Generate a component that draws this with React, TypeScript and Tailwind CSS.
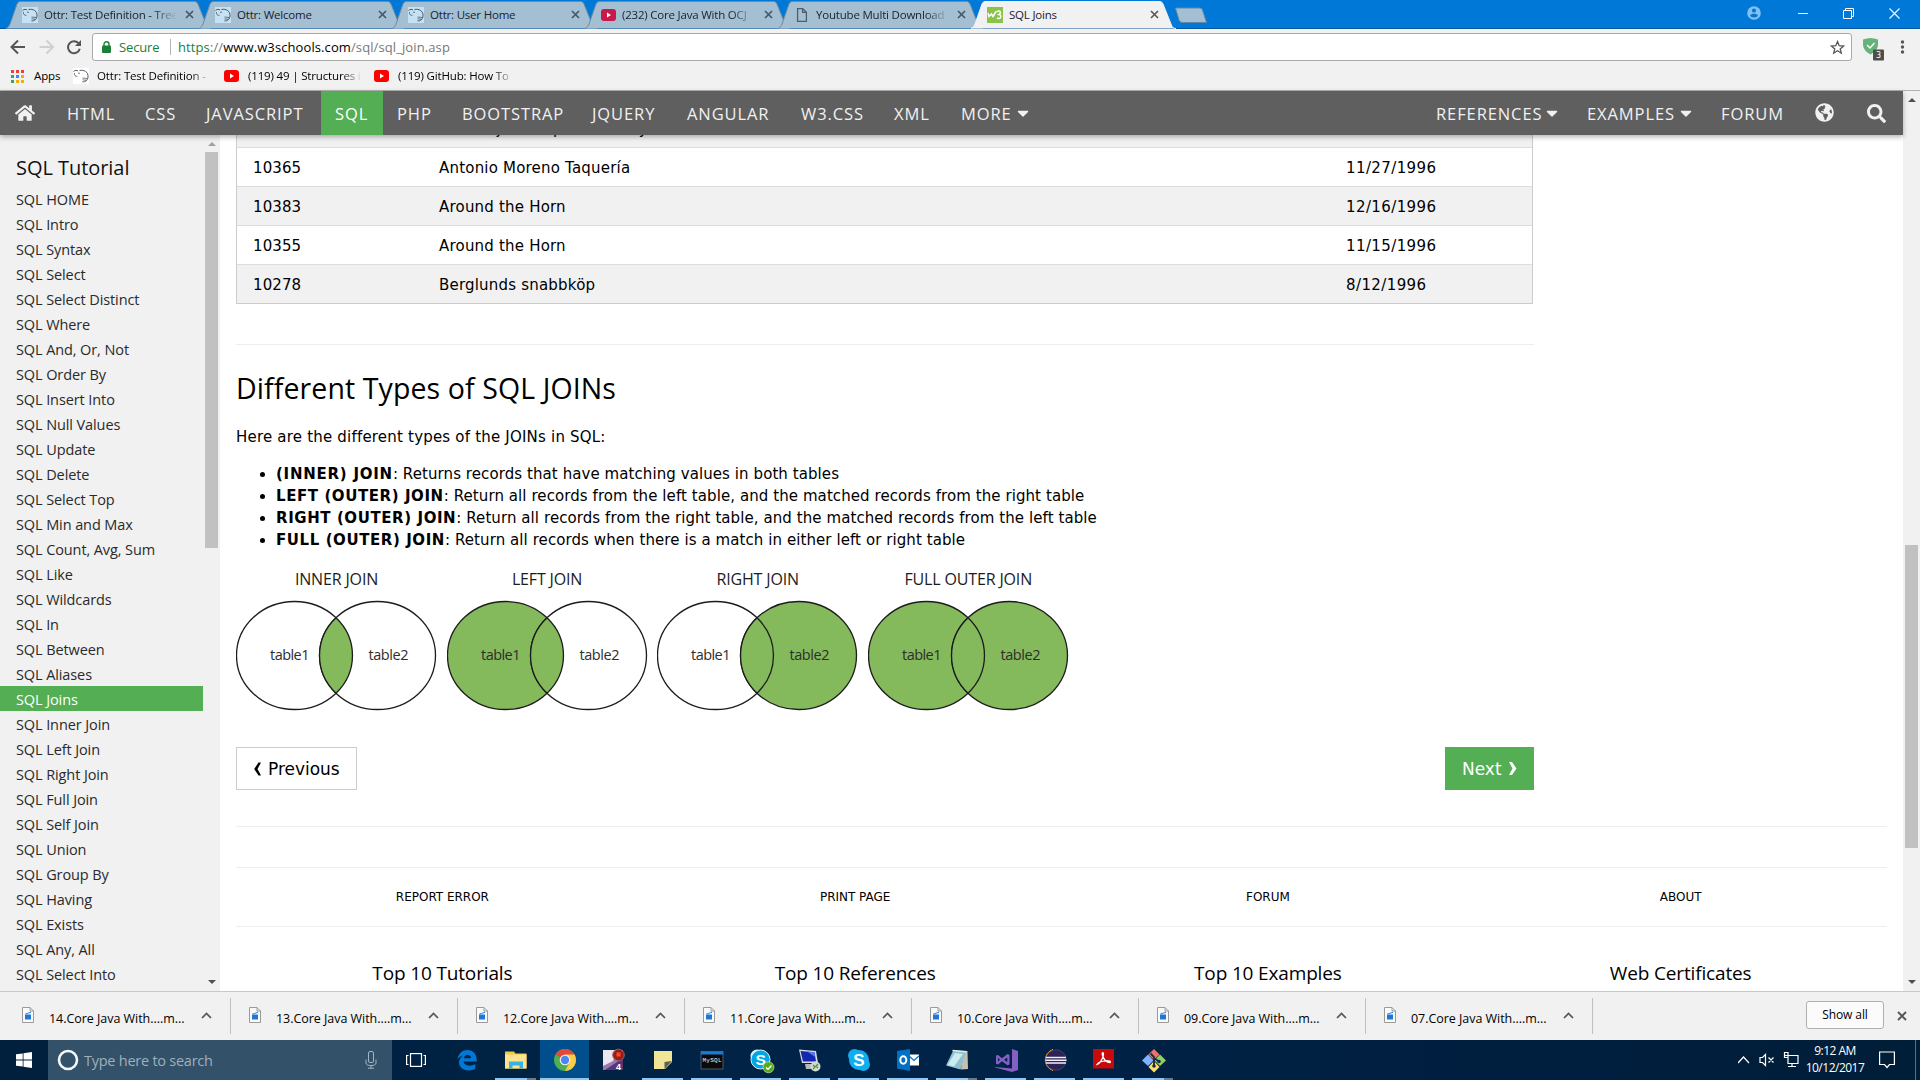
import React from "react";
import { FaHome, FaSearch, FaGlobeAmericas, FaCaretDown } from "react-icons/fa";

const UI = "font-['Open_Sans','Noto_Sans',sans-serif]";
const VERDANA = "font-['DejaVu_Sans',sans-serif]";

function OttrIcon({ bg }: { bg: string }) {
  return (
    <svg width="16" height="16" viewBox="0 0 16 16" className="shrink-0" fill="none" stroke="#3c4650">
      <rect width="16" height="16" fill={bg} stroke="none" />
      <path d="M.5 3.500 C2 2 4 2.200 5 3 M6.500 2.500 C11 1.500 15.500 4 15 9 C14.800 12 12.500 14.300 9.500 13.800" strokeWidth=".9" />
      <path d="M1.500 5 C1 7.500 2.500 8.500 4.500 8.300 M9.500 10 L14 10.500 M9.500 11.800 L13.500 12.300" strokeWidth=".7" />
      <circle cx="6" cy="5.200" r=".7" fill="#3c4650" stroke="none" />
    </svg>
  );
}

function YouTubeIcon({ fill }: { fill: string }) {
  return (
    <svg width="15" height="12" viewBox="0 0 15 12" className="shrink-0">
      <rect width="15" height="12" rx="3" fill={fill} />
      <path d="M6 3.500 L10 6 L6 8.500 Z" fill="#fff" />
    </svg>
  );
}

function PageIcon() {
  return (
    <svg width="16" height="16" viewBox="0 0 16 16" className="shrink-0" fill="none" stroke="#4d5f6c" strokeWidth="1.300">
      <path d="M3.600 1.600 H8.700 L12.400 5.300 V14.400 H3.600 Z M8.600 1.600 V5.400 H12.400" />
    </svg>
  );
}

function W3Icon() {
  return (
    <svg width="16" height="16" viewBox="0 0 16 16" className="shrink-0" fill="none" stroke="#fff" strokeWidth="1.500">
      <rect width="16" height="16" fill="#8bc34a" stroke="none" />
      <path d="M1 6 L2 9.500 L4.500 7 L6 9.500 L9 4.500 M9.500 5 C13 2.500 15 6 12 7.500 C15.500 8.500 13.500 13 10 11" />
    </svg>
  );
}

function TabClose({ color }: { color: string }) {
  return (
    <svg width="9" height="9" viewBox="0 0 9 9" className="shrink-0" stroke={color} strokeWidth="1.700">
      <path d="M1 1 L8 8 M8 1 L1 8" />
    </svg>
  );
}

const tabs = [
  { title: "Ottr: Test Definition - Tree", icon: "ottr", fade: true },
  { title: "Ottr: Welcome", icon: "ottr", fade: false },
  { title: "Ottr: User Home", icon: "ottr", fade: false },
  { title: "(232) Core Java With OCJ", icon: "yt", fade: true },
  { title: "Youtube Multi Download", icon: "page", fade: true },
  { title: "SQL Joins", icon: "w3", fade: false },
];

function Tab({ title, icon, fade, active }: { title: string; icon: string; fade: boolean; active: boolean }) {
  return (
    <div className={active ? "relative z-10 w-[193px] h-[29px] shrink-0" : "relative w-[193px] h-[29px] shrink-0"}>
      <svg width="208" height="29" viewBox="0 0 208 29" className="absolute left-0 top-0">
        <path
          d="M0 28.500 C2 28 3 26 4 24 L11 4 Q12 1.500 14 1.500 H189 Q191 1.500 192 4 L200 24 C201 27 202 28.500 205 28.500"
          fill={active ? "#f1f1f1" : "#a4bed2"}
          stroke={active ? "#f1f1f1" : "#6d8ba3"}
        />
      </svg>
      <div className="relative flex h-full items-center pl-[16px]">
        {icon === "ottr" && <OttrIcon bg="#c5e1f3" />}
        {icon === "yt" && <YouTubeIcon fill="#c9194a" />}
        {icon === "page" && <PageIcon />}
        {icon === "w3" && <W3Icon />}
        <div
          className={
            fade
              ? "ml-[6px] w-[133px] overflow-hidden whitespace-nowrap text-[11.5px] leading-4 tracking-[-0.2px] text-[#16222c] [mask-image:linear-gradient(to_right,black_82%,transparent)]"
              : "ml-[6px] w-[133px] overflow-hidden whitespace-nowrap text-[11.5px] leading-4 tracking-[-0.2px] text-[#16222c]"
          }
        >
          {title}
        </div>
        <div className="ml-auto mr-[3px] flex w-[14px] justify-center">
          <TabClose color={active ? "#5a5a5a" : "#46586a"} />
        </div>
      </div>
    </div>
  );
}

function TabStrip() {
  return (
    <div className="relative flex h-[29px] bg-[#0078d7] pl-[6px]">
      <div className="absolute inset-x-0 bottom-0 h-px bg-[#0a57a0]" />
      {tabs.map((t, i) => (
        <Tab key={i} {...t} active={i === 5} />
      ))}
      <svg width="34" height="17" viewBox="0 0 34 17" className="ml-[10px] mt-[7px]">
        <path d="M1.500 1 H26 Q28 1 28.500 3 L32.500 15.500 H8 Q6 15.500 5 13 Z" fill="#a4bed2" stroke="#5d88ad" />
      </svg>
      <div className="ml-auto flex h-[26px] items-center text-white">
        <svg width="14" height="14" viewBox="0 0 14 14" className="mr-[37px]">
          <circle cx="7" cy="7" r="6.800" fill="#86bfee" />
          <circle cx="7" cy="4.600" r="2.100" fill="#0078d7" />
          <path d="M3 9.800 C4 7.200 10 7.200 11 9.800 C9.500 12 4.500 12 3 9.800Z" fill="#0078d7" />
        </svg>
        <svg width="10" height="11" viewBox="0 0 10 11" className="mr-[35px]">
          <path d="M0 5.500 H10" stroke="#fff" />
        </svg>
        <svg width="11" height="11" viewBox="0 0 11 11" className="mr-[35px]" fill="none" stroke="#fff">
          <path d="M.5 2.500 H8.500 V10.500 H.5 Z M2.500 2.500 V.5 H10.500 V8.500 H8.500" />
        </svg>
        <svg width="11" height="11" viewBox="0 0 11 11" className="mr-[20px]" stroke="#fff" strokeWidth="1.100">
          <path d="M.5 .5 L10.500 10.500 M10.500 .5 L.5 10.500" />
        </svg>
      </div>
    </div>
  );
}

function Toolbar() {
  return (
    <div className="flex h-[36px] items-center bg-[#f1f1f1]">
      <svg width="92" height="32" viewBox="0 0 92 32" fill="none" strokeWidth="2">
        <path d="M25 16 H12 M18 9.500 L11.500 16 L18 22.500" stroke="#555" />
        <path d="M39.500 16 H52.500 M46.500 9.500 L53 16 L46.500 22.500" stroke="#d0d0d0" />
        <path d="M78.500 12.200 A6 6 0 1 0 79.800 17.800" stroke="#555" />
        <path d="M81 9 V15 H75 Z" fill="#555" />
      </svg>
      <div className="flex h-[28px] w-[1760px] items-center rounded-[3px] border border-[#a9a9a9] bg-white pl-[9px]">
        <svg width="9" height="12" viewBox="0 0 9 12" fill="none">
          <rect x="0" y="4.500" width="9" height="7.500" rx="1" fill="#188038" />
          <path d="M2 5 V3.200 A2.500 2.500 0 0 1 7 3.200 V5" stroke="#188038" strokeWidth="1.400" />
        </svg>
        <span className="ml-[8px] w-[43px] pt-px text-[13px] tracking-[-0.15px] text-[#188038]">Secure</span>
        <span className="ml-[8px] mr-[7px] h-[16px] w-px bg-[#b5b5b5]" />
        <span className="whitespace-nowrap pt-px text-[13px] tracking-[0.1px] text-[#777]">
          <span className="text-[#188038]">https</span>://<span className="text-black">www.w3schools.com</span>/sql/sql_join.asp
        </span>
        <svg width="15" height="15" viewBox="0 0 15 15" className="ml-auto mr-[6px]" fill="none" stroke="#555" strokeWidth="1.300">
          <path d="M7.500 1.600 L9.200 5.700 L13.600 6 L10.200 8.900 L11.300 13.200 L7.500 10.800 L3.700 13.200 L4.800 8.900 L1.400 6 L5.800 5.700 Z" />
        </svg>
      </div>
      <svg width="68" height="32" viewBox="0 0 68 32">
        <path d="M11 8.500 Q18.500 5.500 26 8.500 V13 C26 18 23 21 18.500 23.500 C14 21 11 18 11 13 Z" fill="#67b279" />
        <path d="M15 14 L18 17 L22.500 12" stroke="#fff" strokeWidth="1.400" fill="none" />
        <rect x="21" y="18.500" width="11" height="11" rx="1" fill="#4e4e4e" />
        <text x="26.500" y="27.200" fontSize="8" fill="#fff" textAnchor="middle" fontFamily="DejaVu Sans">3</text>
        <g fill="#555">
          <circle cx="50.500" cy="11" r="1.700" />
          <circle cx="50.500" cy="16" r="1.700" />
          <circle cx="50.500" cy="21" r="1.700" />
        </g>
      </svg>
    </div>
  );
}

function Bookmark({ children, className }: { children: string; className: string }) {
  return (
    <span className={"overflow-hidden whitespace-nowrap text-[11.5px] leading-4 tracking-[-0.16px] text-black [mask-image:linear-gradient(to_right,black_82%,transparent)] " + className}>
      {children}
    </span>
  );
}

function Bookmarks() {
  const colors = ["#e8413a", "#e8413a", "#e8413a", "#34a853", "#4285f4", "#f9ab00", "#34a853", "#f9ab00", "#f9ab00"];
  return (
    <div className="flex h-[26px] items-center border-b border-[#b2b2b2] bg-[#f1f1f1] pb-[3px] pl-[11px]">
      <div className="grid grid-cols-3 gap-[2px]">
        {colors.map((c, i) => (
          <span key={i} className="h-[3px] w-[3px]" style={{ background: c }} />
        ))}
      </div>
      <span className="ml-[10px] w-[39px] text-[11.5px] leading-4 tracking-[-0.1px]">Apps</span>
      <OttrIcon bg="#fff" />
      <Bookmark className="ml-[8px] w-[114px]">Ottr: Test Definition -</Bookmark>
      <span className="ml-[13px]" />
      <YouTubeIcon fill="#f00" />
      <Bookmark className="ml-[9px] w-[114px]">(119) 49 | Structures i</Bookmark>
      <span className="ml-[12px]" />
      <YouTubeIcon fill="#f00" />
      <Bookmark className="ml-[9px] w-[116px]">(119) GitHub: How To</Bookmark>
    </div>
  );
}

const nav: [string, string][] = [
  ["HTML", "w-[78px]"],
  ["CSS", "w-[61px]"],
  ["JAVASCRIPT", "w-[130px]"],
  ["SQL", "w-[62px]"],
  ["PHP", "w-[65px]"],
  ["BOOTSTRAP", "w-[130px]"],
  ["JQUERY", "w-[95px]"],
  ["ANGULAR", "w-[114px]"],
  ["W3.CSS", "w-[93px]"],
  ["XML", "w-[67px]"],
];

function NavBar() {
  return (
    <div className="relative z-10 flex h-[44px] items-center bg-[#5f5f5f] text-[16.5px] leading-[46px] tracking-[0.9px] text-[#f1f1f1] shadow-[0_2px_5px_rgba(0,0,0,0.3)]">
      <div className="flex w-[52px] justify-center pr-[2px]">
        <FaHome size={20} />
      </div>
      {nav.map(([label, w]) => (
        <div
          key={label}
          className={
            (label === "SQL" ? "bg-[#53ae54] text-white " : "") +
            (["HTML", "CSS", "JAVASCRIPT"].includes(label) ? "pl-[15px] " : "pl-[14px] ") +
            "h-[44px] whitespace-nowrap " + w
          }
        >
          {label}
        </div>
      ))}
      <div className="flex h-[44px] items-center pl-[14px]">
        <span className="h-[44px] w-[52px]">MORE</span>
        <FaCaretDown size={18} className="ml-px" />
      </div>
      <div className="ml-auto flex h-[44px] items-center">
        <div className="flex w-[151px] items-center">
          <span className="h-[44px] w-[106px]">REFERENCES</span>
          <FaCaretDown size={18} className="ml-px" />
        </div>
        <div className="flex w-[134px] items-center">
          <span className="h-[44px] w-[89px]">EXAMPLES</span>
          <FaCaretDown size={18} className="ml-px" />
        </div>
        <div className="h-[44px] w-[94px]">FORUM</div>
        <FaGlobeAmericas size={19} className="mb-[2px]" />
        <FaSearch size={19} className="ml-[33px] mr-[17px]" />
      </div>
    </div>
  );
}

const menu = [
  "SQL HOME", "SQL Intro", "SQL Syntax", "SQL Select", "SQL Select Distinct", "SQL Where", "SQL And, Or, Not",
  "SQL Order By", "SQL Insert Into", "SQL Null Values", "SQL Update", "SQL Delete", "SQL Select Top",
  "SQL Min and Max", "SQL Count, Avg, Sum", "SQL Like", "SQL Wildcards", "SQL In", "SQL Between", "SQL Aliases",
  "SQL Joins", "SQL Inner Join", "SQL Left Join", "SQL Right Join", "SQL Full Join", "SQL Self Join", "SQL Union",
  "SQL Group By", "SQL Having", "SQL Exists", "SQL Any, All", "SQL Select Into",
];

function Arrow({ up, color }: { up?: boolean; color: string }) {
  return (
    <svg width="8" height="4" viewBox="0 0 8 4">
      <path d={up ? "M0 4 L4 0 L8 4 Z" : "M0 0 L4 4 L8 0 Z"} fill={color} />
    </svg>
  );
}

function Sidebar() {
  return (
    <div className="flex w-[220px] shrink-0 overflow-hidden bg-[#f1f1f1]">
      <div className="w-[203px]">
        <h2 className="mt-[17px] pl-[16px] text-[20px] leading-[32px] tracking-[-0.05px] text-[#111]">SQL Tutorial</h2>
        <div className="mt-[2px]">
          {menu.map((m) => (
            <div
              key={m}
              className={
                m === "SQL Joins"
                  ? "h-[25px] whitespace-nowrap bg-[#53ae54] pl-[16px] text-[14.5px] leading-[27px] tracking-[-0.1px] text-white"
                  : "h-[25px] whitespace-nowrap pl-[16px] text-[14.5px] leading-[27px] tracking-[-0.1px] text-[#2a2a2a]"
              }
            >
              {m}
            </div>
          ))}
        </div>
      </div>
      <div className="ml-[2px] flex w-[13px] flex-col items-center pt-[7px]">
        <Arrow up color="#a0a0a0" />
        <div className="mt-[6px] h-[396px] w-full shrink-0 bg-[#c1c1c1]" />
        <div className="mb-[7px] mt-auto flex">
          <Arrow color="#505050" />
        </div>
      </div>
    </div>
  );
}

const rows = [
  ["10308", "Ana Trujillo Emparedados y helados", "9/18/1996"],
  ["10365", "Antonio Moreno Taquería", "11/27/1996"],
  ["10383", "Around the Horn", "12/16/1996"],
  ["10355", "Around the Horn", "11/15/1996"],
  ["10278", "Berglunds snabbköp", "8/12/1996"],
];

const joins = [
  { name: "INNER JOIN", left: "#fff", right: "#fff", mid: "#84b95c" },
  { name: "LEFT JOIN", left: "#84b95c", right: "#fff", mid: "#84b95c" },
  { name: "RIGHT JOIN", left: "#fff", right: "#84b95c", mid: "#84b95c" },
  { name: "FULL OUTER JOIN", left: "#84b95c", right: "#84b95c", mid: "#84b95c" },
];

function Venn({ left, right, mid }: { left: string; right: string; mid: string }) {
  return (
    <svg width="202" height="112" viewBox="0 0 202 112" stroke="#1c1c1c" strokeWidth="1.300">
      <ellipse cx="58.500" cy="55.500" rx="58" ry="54" fill={left} />
      <ellipse cx="141.500" cy="55.500" rx="58" ry="54" fill={right} />
      <path d="M100 17.800 A58 54 0 0 1 100 93.200 A58 54 0 0 1 100 17.800 Z" fill={mid} />
      <g stroke="none" fill="#2e2e2e" fontFamily="Open Sans" fontSize="14.500">
        <text x="34" y="59.500" textLength="39.500">table1</text>
        <text x="132.500" y="59.500" textLength="40">table2</text>
      </g>
    </svg>
  );
}

const kinds = [
  ["(INNER) JOIN", ": Returns records that have matching values in both tables"],
  ["LEFT (OUTER) JOIN", ": Return all records from the left table, and the matched records from the right table"],
  ["RIGHT (OUTER) JOIN", ": Return all records from the right table, and the matched records from the left table"],
  ["FULL (OUTER) JOIN", ": Return all records when there is a match in either left or right table"],
];

function Content() {
  return (
    <div className={"flex-1 overflow-hidden bg-white pl-[16px] text-black " + VERDANA}>
      <div className="-mt-[27px] w-[1297px] border border-[#ccc] text-[15px]">
        {rows.map((r, i) => (
          <div
            key={i}
            className={
              (i % 2 === 0 ? "bg-[#f1f1f1] " : "bg-white ") +
              (i < 4 ? "h-[39px] border-b border-[#ddd] " : "h-[38px] ") +
              "flex pl-[16px] leading-[40px] tracking-[0.2px]"
            }
          >
            <span className="w-[186px] tracking-[0.1px]">{r[0]}</span>
            <span className="w-[907px]">{r[1]}</span>
            <span className="tracking-[0.4px]">{r[2]}</span>
          </div>
        ))}
      </div>
      <div className="mt-[40px] h-px w-[1298px] bg-[#eee]" />
      <h1 className={"mt-[21px] text-[28.5px] leading-[44px] tracking-[0.1px] " + UI}>Different Types of SQL JOINs</h1>
      <p className="mt-[15px] text-[15px] leading-[24px] tracking-[0.2px]">Here are the different types of the JOINs in SQL:</p>
      <ul className="mt-[14px] pl-[24px] text-[15px] leading-[22px] tracking-[0.08px]">
        {kinds.map(([b, t]) => (
          <li key={b} className="flex items-center whitespace-pre">
            <span className="mr-[11px] h-[5px] w-[5px] rounded-full bg-black" />
            <b className={b === "(INNER) JOIN" ? "tracking-[0.75px]" : "tracking-[0.58px]"}>{b}</b>
            {t}
          </li>
        ))}
      </ul>
      <div className={"mt-[16px] flex gap-[8.6px] " + UI}>
        {joins.map((j) => (
          <div key={j.name} className="w-[202px]">
            <div className="mb-[8px] pr-[1px] text-center text-[16px] leading-[25px] tracking-[-0.15px] text-[#1c1c1c]">{j.name}</div>
            <Venn {...j} />
          </div>
        ))}
      </div>
      <div className="mt-[35px] flex h-[43px] w-[1298px] justify-between text-[17px] leading-[43px]">
        <div className="flex w-[121px] items-center whitespace-nowrap border border-[#ccc] pl-[16px]">
          <svg width="9" height="14" viewBox="0 0 9 14" className="mr-[6px]">
            <path d="M8 .5 L4.500 7 L8 13.500 H5.500 L1.200 7 L5.500 .5 Z" fill="#000" />
          </svg>
          <span className="pt-[2px] tracking-[-0.02px]">Previous</span>
        </div>
        <div className="flex w-[89px] items-center whitespace-nowrap bg-[#53ae54] pl-[17px] text-white">
          <span className="w-[41px] pt-[2px] tracking-[-0.02px]">Next</span>
          <svg width="9" height="15" viewBox="0 0 9 14" className="ml-[5px]">
            <path d="M1 .5 L4.500 7 L1 13.500 H4 L8.500 7 L4 .5 Z" fill="#fff" />
          </svg>
        </div>
      </div>
      <div className="mt-[36px] w-[1651px] border-t border-[#eee]" />
      <div className="mt-[40px] flex h-[60px] w-[1651px] border-y border-[#eee] text-[12px] leading-[58px] tracking-[-0.02px]">
        {["REPORT ERROR", "PRINT PAGE", "FORUM", "ABOUT"].map((f) => (
          <div key={f} className="flex-1 text-center">{f}</div>
        ))}
      </div>
      <div className={"mt-[30px] flex w-[1651px] text-[19px] leading-[32px] tracking-[-0.15px] " + UI}>
        {["Top 10 Tutorials", "Top 10 References", "Top 10 Examples", "Web Certificates"].map((f) => (
          <div key={f} className="flex-1 text-center">{f}</div>
        ))}
      </div>
    </div>
  );
}

function PageScrollbar() {
  return (
    <div className="flex w-[17px] shrink-0 flex-col items-center bg-[#f1f1f1] pt-[7px]">
      <Arrow up color="#505050" />
      <div className="mt-[443px] h-[303px] w-[13px] bg-[#c1c1c1]" />
      <div className="mb-[7px] mt-auto flex">
        <Arrow color="#505050" />
      </div>
    </div>
  );
}

function Downloads() {
  return (
    <div className="flex h-[49px] items-center border-t border-[#c8c8c8] bg-[#f1f1f1]">
      {["14", "13", "12", "11", "10", "09", "07"].map((n, i) => (
        <div key={n} className={(i === 0 ? "w-[231px] pl-[22px] " : "w-[227px] pl-[18px] ") + "flex h-[36px] items-center border-r border-[#c0c0c0]"}>
          <svg width="12" height="16" viewBox="0 0 12 16" className="mb-[3px]">
            <path d="M.5 .5 H8 L11.500 4 V15.500 H.5 Z" fill="#fafafa" stroke="#9a9a9a" />
            <path d="M8 .5 V4 H11.500" fill="none" stroke="#9a9a9a" />
            <path d="M3 7.500 H9 V12.500 H3 Z M3 6.800 L9 4.800 V5.800 L4 7.200 Z" fill="#1e78d7" />
          </svg>
          <span className="ml-[15px] w-[142px] whitespace-nowrap pt-[5px] text-[12.5px] leading-4 tracking-[-0.04px] text-black">{n}.Core Java With....m...</span>
          <svg width="11" height="7" viewBox="0 0 11 7" className="ml-[10px] mb-[1px]" fill="none" stroke="#555" strokeWidth="1.700">
            <path d="M1 6 L5.500 1.500 L10 6" />
          </svg>
        </div>
      ))}
      <div className="ml-auto mb-[3px] h-[28px] w-[78px] rounded-[3px] border border-[#b0b0b0] bg-[#fbfbfb] text-center text-[12px] leading-[26px] tracking-[-0.1px] text-black">
        Show all
      </div>
      <svg width="10" height="10" viewBox="0 0 10 10" className="ml-[13px] mr-[13px] mb-[1px]" stroke="#555" strokeWidth="1.900">
        <path d="M1 1 L9 9 M9 1 L1 9" />
      </svg>
    </div>
  );
}

const appIcons: React.ReactNode[] = [
  // Edge
  <path key="e" d="M1.500 10.500 C2.500 4 6.500 1 11.500 1 C18 1 21 6 20.800 12.500 H7.500 C8 16.500 14 18 19.300 15.300 V19.800 C12.500 23.500 3.500 21 3 13.800 C3 10.500 4.800 8 7.500 6.500 C4.800 7 2.800 8.500 1.500 10.500 Z M7.800 9.200 H15 C15 4.500 8.500 4.500 7.800 9.200 Z" fill="#0078d7" fillRule="evenodd" />,
  // File Explorer
  <g key="x">
    <path d="M0 2.500 H9 L10.500 4.500 H21.500 V19.500 H0 Z" fill="#f5c843" />
    <path d="M0 5.500 H21.500 V19.500 H0 Z" fill="#ffe38f" />
    <path d="M4 19.500 V12.500 H18 V19.500 H14.500 V16.500 H7.500 V19.500 Z" fill="#35b2e6" />
  </g>,
  // Chrome
  <g key="c">
    <circle cx="11" cy="11" r="11" fill="#4caf50" />
    <path d="M11 11 L1.500 5.500 A11 11 0 0 1 20.500 5.500 Z" fill="#e0493c" />
    <path d="M11 5.500 H20.500 A11 11 0 0 1 11 22 L15.500 13.500 Z" fill="#fbcb43" />
    <circle cx="11" cy="11" r="5.300" fill="#f4f4f4" />
    <circle cx="11" cy="11" r="4.200" fill="#4a88ee" />
  </g>,
  // Recorder
  <g key="r">
    <rect x="0" y="1" width="20" height="20" fill="#9a7ab0" />
    <path d="M0 1 H14 L10 12 L0 17 Z" fill="#ece6ef" />
    <path d="M2 21 L20 9 V21 Z" fill="#5a3278" />
    <circle cx="15.500" cy="6" r="5.800" fill="#9c1c14" stroke="#8a6a60" />
    <path d="M13.500 3.500 H17.500 V7.500 H13.500Z" fill="#f04a30" />
    <text x="13" y="20.500" fontSize="9" fontWeight="bold" fill="#fff" fontFamily="Liberation Sans">4</text>
  </g>,
  // Sticky Notes
  <g key="s">
    <path d="M2 2 H20 V13 L13 20 H2 Z" fill="#f1e596" />
    <path d="M20 12 L12.500 20 V13 Z" fill="#5d6350" />
  </g>,
  // MySQL shell
  <g key="m">
    <rect x="0" y="2.500" width="22" height="17.500" fill="#0a0a0a" stroke="#5c6a78" strokeWidth=".8" />
    <rect x="0" y="2.500" width="22" height="3" fill="#1f7ad0" />
    <text x="1.500" y="13" fontSize="6" fill="#eee" textLength="19" fontFamily="Liberation Mono">MySQL</text>
  </g>,
  // Skype for Business
  <g key="sb">
    <circle cx="7" cy="7" r="6.500" fill="#d8f1fb" />
    <circle cx="10.500" cy="10.500" r="9.500" fill="#00a7e8" stroke="#d8f1fb" />
    <text x="5.500" y="16" fontSize="15.500" fontWeight="bold" fill="#fff" fontFamily="Liberation Sans">S</text>
    <circle cx="18.500" cy="18.300" r="5.500" fill="#56a91a" stroke="#dff0d0" strokeWidth=".6" />
    <path d="M16 18.500 L18 20.300 L21.500 16.500" stroke="#fff" strokeWidth="1.300" fill="none" />
  </g>,
  // Remote Desktop
  <g key="rd">
    <path d="M0 .5 L17 2 L19 14 L3 14 Z" fill="#d5dbe4" />
    <path d="M1.500 2 L15.500 3.300 L17 12.500 L4 12.500 Z" fill="#1327b0" />
    <path d="M8 2.600 L15.500 3.300 L16.300 8 Z" fill="#5d78e8" />
    <path d="M6 15 L14 15 L15 20 L7 20 Z" fill="#b8b8b8" />
    <circle cx="16.500" cy="17.500" r="5" fill="#d4d7d2" />
    <path d="M14 16 L16 18 L14 20 M19 15 L17 17 L19 19" stroke="#389c38" strokeWidth="1.300" fill="none" />
  </g>,
  // Skype
  <g key="sk">
    <circle cx="6.500" cy="6.500" r="6.500" fill="#10aef0" />
    <circle cx="15.500" cy="15.500" r="6.500" fill="#10aef0" />
    <circle cx="11" cy="11" r="10" fill="#10aef0" />
    <text x="5.300" y="17" fontSize="17" fontWeight="bold" fill="#fff" fontFamily="Liberation Sans">S</text>
  </g>,
  // Outlook
  <g key="o">
    <rect x="12" y="5.500" width="10" height="11" fill="#fff" />
    <path d="M12 7 L17 11.500 L22 7" stroke="#0072c6" strokeWidth="1.300" fill="none" />
    <path d="M0 2 L13 0 V22 L0 19.500 Z" fill="#0072c6" />
    <ellipse cx="6.300" cy="11" rx="3" ry="3.800" fill="none" stroke="#fff" strokeWidth="2" />
  </g>,
  // Notepad
  <g key="n">
    <path d="M6 1.500 L21.500 2 L22 20 L15 20.500 L17 5 Z" fill="#c8bfae" />
    <path d="M7 2 L20 3.500 L14.500 20.500 L0 16.500 Z" fill="#8cc3cf" />
    <path d="M9 4 L17 5 L8 17.500 L1.500 16 Z" fill="#cdebf0" />
    <path d="M6.500 1.500 L20.500 2.800" stroke="#e9e9e9" strokeWidth="1.600" />
  </g>,
  // Visual Studio
  <g key="v" fill="#865fc5">
    <path d="M17 0 L23 2 V21 L17 23 L0 18.500 V18 L17 19.500 Z" />
    <path d="M1 6.500 L3 6 L7 9.200 L12.500 5 L14.500 6 V15.500 L12.500 16.300 L7 12.200 L3 15.400 L1 14.700 Z M3 8.800 V12.500 L5 10.700 Z M12.300 8.500 L9 10.700 L12.300 13 Z" fillRule="evenodd" />
  </g>,
  // Eclipse
  <g key="ec">
    <path d="M9 .5 A11 11 0 0 0 9 21.500 A13 13 0 0 1 9 .5Z" fill="#f7941e" stroke="#f7941e" />
    <circle cx="12" cy="11" r="10.300" fill="#2c2255" stroke="#5a4f86" strokeWidth=".6" />
    <path d="M2 8.500 H22 M1.500 11.300 H22.500 M2 14 H22" stroke="#f2f0fa" strokeWidth="1.600" />
  </g>,
  // Adobe Reader
  <g key="a">
    <rect x="0" y="0" width="21" height="19.500" fill="#c80a0a" />
    <path d="M4 15.500 C7 14.500 10.500 9 10.500 5 C10 2.500 8.500 4 9.500 6.500 C11 11 14 13.500 17 13.500 C18.500 12.500 16 11.500 13 11.800 C9 12 5 13.500 4 15.500 Z" fill="none" stroke="#fff" strokeWidth="1.300" />
  </g>,
  // Git
  <g key="g">
    <path d="M12 0 L17.500 5.500 L12 11 L6.500 5.500 Z" fill="#f2706a" />
    <path d="M6 5.500 L11.500 11.500 L6 17 L0 11.500 Z" fill="#80b3ff" />
    <path d="M18 5.500 L24 11.500 L18 17 L12.500 11.500 Z" fill="#8dd35f" />
    <path d="M12 12 L17.500 18 L12 23.500 L6.500 18 Z" fill="#ffdf70" />
    <path d="M8.500 4.500 L12 8 V18 M12 9 L17 12.500" stroke="#1b2b3b" strokeWidth="1.800" fill="none" />
    <circle cx="12" cy="17" r="1.800" fill="#1b2b3b" />
    <circle cx="17" cy="12.500" r="1.800" fill="#1b2b3b" />
  </g>,
];

function Taskbar() {
  return (
    <div className="flex h-[40px] bg-[linear-gradient(to_right,#00203d,#002448_45%,#001f40_75%,#001e38)]">
      <div className="flex w-[48px] items-center justify-center">
        <svg width="16" height="16" viewBox="0 0 16 16" fill="#fff">
          <path d="M0 2.300 L6.700 1.400 V7.500 H0 Z M7.500 1.300 L16 0 V7.500 H7.500 Z M0 8.400 H6.700 V14.600 L0 13.700 Z M7.500 8.400 H16 V16 L7.500 14.700 Z" />
        </svg>
      </div>
      <div className="flex w-[344px] items-center bg-[#335168] pl-[9px]">
        <svg width="22" height="22" viewBox="0 0 22 22">
          <circle cx="11" cy="11" r="9" fill="none" stroke="#f4f6f8" strokeWidth="2.600" />
        </svg>
        <span className="ml-[5px] whitespace-nowrap pt-px text-[14.5px] tracking-[-0.25px] text-[#9fb0bd]">Type here to search</span>
        <svg width="12" height="18" viewBox="0 0 12 18" className="ml-auto mr-[15px]" fill="none" stroke="#a5b4c0">
          <rect x="3.500" y=".5" width="5" height="11" rx="1.500" />
          <path d="M1 8.500 V12 Q1 14.500 6 14.500 Q11 14.500 11 12 V8.500 M6 14.500 V17 M3 17.200 H9" />
        </svg>
      </div>
      <div className="flex w-[50px] items-center pl-[14px]">
        <svg width="20" height="14" viewBox="0 0 20 14" fill="none" stroke="#fff" strokeWidth="1.200">
          <rect x="4.500" y=".6" width="11" height="12.800" />
          <path d="M2.500 2.500 H.6 V11.500 H2.500 M17.500 2.500 H19.400 V11.500 H17.500" />
        </svg>
      </div>
      {appIcons.map((icon, i) => (
        <div key={i} className={(i === 2 ? "bg-[#004e8c] " : "") + "flex w-[49px] flex-col items-center"}>
          <svg width="24" height="26" viewBox="-1 -1 24 26" className="mt-[8px] overflow-visible">
            {icon}
          </svg>
          {i !== 0 && i !== 3 && (
            <div className={(i === 2 ? "w-full " : "w-[41px] ") + "mt-auto flex h-[2px] bg-[#8fc6f2]"}>
              {(i === 1 || i === 10 || i === 14) && <div className="ml-auto w-[9px] bg-[#5f7d96]" />}
            </div>
          )}
        </div>
      ))}
      <div className="ml-auto flex items-center">
        <svg width="62" height="18" viewBox="-1 0 62 18" fill="none" stroke="#fff" strokeWidth="1.200">
          <path d="M-1 12 L4.500 6 L10 12" />
          <path d="M21 6.500 H23.500 L26.500 3.500 V14.500 L23.500 11.500 H21 Z M29.500 6.500 L34.500 11.500 M34.500 6.500 L29.500 11.500" />
          <path d="M46 4.500 H59 V12.500 H49 V7 M53 12.500 V15.500 M49 15.500 H57 M45.500 1.500 H49 V6.500 H45.500 Z" />
        </svg>
        <div className="ml-[4px] w-[62px] pb-[2px] text-center text-[12px] leading-[17px] tracking-[-0.5px] text-white">
          <div>9:12 AM</div>
          <div>10/12/2017</div>
        </div>
        <svg width="16" height="18" viewBox="0 0 16 18" className="ml-[13px] mr-[20px]" fill="none" stroke="#fff" strokeWidth="1.200">
          <path d="M.6 1 H15.400 V13.500 H10.500 L8 16.500 L5.500 13.500 H.6 Z" />
        </svg>
        <div className="mr-[4px] h-[40px] w-px bg-[#5b6f82]" />
      </div>
    </div>
  );
}

export default function App() {
  return (
    <div className={"flex h-[1080px] w-[1920px] flex-col overflow-hidden bg-white " + UI}>
      <TabStrip />
      <Toolbar />
      <Bookmarks />
      <div className="flex h-[900px]">
        <div className="flex w-[1903px] flex-col">
          <NavBar />
          <div className="flex min-h-0 flex-1">
            <Sidebar />
            <Content />
          </div>
        </div>
        <PageScrollbar />
      </div>
      <Downloads />
      <Taskbar />
    </div>
  );
}
